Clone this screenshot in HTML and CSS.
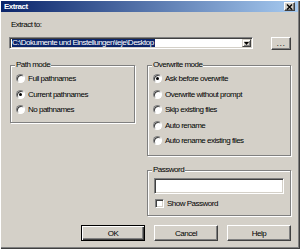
FILE: index.html
```html
<!DOCTYPE html>
<html lang="en">
<head>
    <meta charset="UTF-8">
    <title>Extract</title>
    <link rel="stylesheet" href="styles.css">
</head>
<body>

<div class="window">
    <div class="titlebar">
        <span class="title">Extract</span>
        <span class="close">
            <svg width="7" height="6" viewBox="0 0 7 6"><path d="M1 0.5 L6 5.5 M6 0.5 L1 5.5" stroke="#000" stroke-width="1.4" fill="none"/></svg>
        </span>
    </div>

    <div class="content">
        <div class="field-label">Extract to:</div>
        <div class="path-row">
            <div class="combo">
                <span class="combo-text"><span class="selected">C:\Dokumente und Einstellungen\ieje\Desktop</span></span>
                <span class="combo-btn">
                    <svg width="5" height="3" viewBox="0 0 5 3"><polygon points="0,0 5,0 2.5,3" fill="#000"/></svg>
                </span>
            </div>
            <div class="btn browse"><span class="dots">...</span></div>
        </div>

        <div class="groups">
            <div class="group path-group">
                <div class="group-title">Path mode</div>
                <ul class="options">
                    <li><span class="radio"></span>Full pathnames</li>
                    <li><span class="radio checked"></span>Current pathnames</li>
                    <li><span class="radio"></span>No pathnames</li>
                </ul>
            </div>

            <div class="right-col">
                <div class="group overwrite-group">
                    <div class="group-title">Overwrite mode</div>
                    <ul class="options">
                        <li><span class="radio checked"></span>Ask before overwrite</li>
                        <li><span class="radio"></span>Overwrite without prompt</li>
                        <li><span class="radio"></span>Skip existing files</li>
                        <li><span class="radio"></span>Auto rename</li>
                        <li><span class="radio"></span>Auto rename existing files</li>
                    </ul>
                </div>

                <div class="group password-group">
                    <div class="group-title">Password</div>
                    <div class="textbox"></div>
                    <div class="check-row"><span class="checkbox"></span>Show Password</div>
                </div>
            </div>
        </div>

        <div class="buttons">
            <div class="btn default">OK</div>
            <div class="btn">Cancel</div>
            <div class="btn">Help</div>
        </div>
    </div>
</div>

</body>
</html>
```

FILE: styles.css
```css
body {
    margin: 0;
    padding: 0;
    background-color: #d4d0c8;
    font-family: 'Liberation Sans', Arial, sans-serif;
    font-size: 8px;
    letter-spacing: -0.5px;
    color: #000;
}

.window {
    box-sizing: border-box;
    width: 300px;
    height: 249px;
    padding: 1px 2px 2px 1px;
    background-color: #d4d0c8;
    box-shadow: inset 1px 1px #fff, inset -1px -1px #404040, inset -2px -2px #808080;
}

/* Title bar */
.titlebar {
    height: 11px;
    display: flex;
    align-items: center;
    justify-content: space-between;
    padding: 0 3px 0 3px;
    background: linear-gradient(to right, #0a246a, #a6caf0);
}

.title {
    color: #fff;
    font-weight: bold;
    line-height: 11px;
}

.close {
    box-sizing: border-box;
    width: 11px;
    height: 9px;
    display: flex;
    align-items: center;
    justify-content: center;
    background-color: #d4d0c8;
    border: 1px solid;
    border-color: #fff #404040 #404040 #fff;
    box-shadow: inset -1px -1px #808080;
}

.content {
    padding: 8px 7px 0 8px;
}

.field-label {
    line-height: 10px;
    margin-left: 2px;
}

/* Path combo */
.path-row {
    display: flex;
    justify-content: space-between;
    align-items: flex-start;
    margin-top: 7px;
}

.combo {
    box-sizing: border-box;
    width: 244px;
    height: 12px;
    display: flex;
    align-items: center;
    background-color: #fff;
    border: 1px solid;
    border-color: #808080 #fff #fff #808080;
    box-shadow: inset 1px 1px #404040, inset -1px -1px #d4d0c8;
    padding: 1px;
}

.combo-text {
    flex: 1;
    padding-left: 1px;
    line-height: 8px;
    overflow: hidden;
    white-space: nowrap;
}

.selected {
    background-color: #0a246a;
    color: #fff;
    padding-right: 1px;
}

.combo-btn {
    box-sizing: border-box;
    width: 9px;
    height: 8px;
    display: flex;
    align-items: center;
    justify-content: center;
    background-color: #d4d0c8;
    border: 1px solid;
    border-color: #d4d0c8 #404040 #404040 #d4d0c8;
    box-shadow: inset 1px 1px #fff, inset -1px -1px #808080;
}

/* Buttons */
.btn {
    box-sizing: border-box;
    width: 64px;
    height: 16px;
    display: flex;
    align-items: center;
    justify-content: center;
    background-color: #d4d0c8;
    border: 1px solid;
    border-color: #fff #404040 #404040 #fff;
    box-shadow: inset -1px -1px #808080;
}

.btn.default {
    border-color: #000;
    box-shadow: inset 1px 1px #fff, inset -1px -1px #404040, inset -2px -2px #808080;
}

.browse {
    width: 20px;
    height: 13px;
}

.dots {
    font-size: 9px;
    line-height: 9px;
    letter-spacing: 0.5px;
    color: #333;
}

/* Group boxes */
.groups {
    display: grid;
    grid-template-columns: 126px 144px;
    column-gap: 12px;
    margin-top: 15px;
}

.group {
    box-sizing: border-box;
    border: 1px solid #808080;
    box-shadow: inset 1px 1px #fff, 1px 1px #fff;
}

.group-title {
    width: fit-content;
    margin: -6px 0 0 4px;
    padding: 0 1px;
    line-height: 10px;
    background-color: #d4d0c8;
}

.path-group {
    align-self: start;
    margin-left: 1px;
    width: 125px;
    height: 58px;
}

.right-col {
    display: flex;
    flex-direction: column;
    gap: 14px;
}

.overwrite-group {
    height: 91px;
}

.password-group {
    height: 46px;
}

.options {
    list-style: none;
    margin: 0;
    padding: 1px 0 0 5px;
}

.options li {
    height: 15.5px;
    display: flex;
    align-items: center;
}

.radio {
    box-sizing: border-box;
    position: relative;
    width: 9px;
    height: 9px;
    margin-right: 3px;
    border-radius: 50%;
    background-color: #fff;
    border: 1px solid;
    border-color: #808080 #fff #fff #808080;
    box-shadow: inset 1px 1px #404040;
}

.radio.checked::after {
    content: "";
    position: absolute;
    left: 2px;
    top: 2px;
    width: 3px;
    height: 3px;
    border-radius: 50%;
    background-color: #000;
}

.textbox {
    box-sizing: border-box;
    height: 16px;
    margin: 3px 6px 0 6px;
    background-color: #fff;
    border: 1px solid;
    border-color: #808080 #fff #fff #808080;
    box-shadow: inset 1px 1px #404040, inset -1px -1px #d4d0c8;
}

.check-row {
    display: flex;
    align-items: center;
    height: 10px;
    margin: 4px 0 0 7px;
}

.checkbox {
    box-sizing: border-box;
    width: 9px;
    height: 9px;
    margin-right: 3px;
    background-color: #fff;
    border: 1px solid;
    border-color: #808080 #fff #fff #808080;
    box-shadow: inset 1px 1px #404040, inset -1px -1px #d4d0c8;
}

.buttons {
    display: flex;
    justify-content: flex-end;
    gap: 9px;
    margin-top: 9px;
}
```
